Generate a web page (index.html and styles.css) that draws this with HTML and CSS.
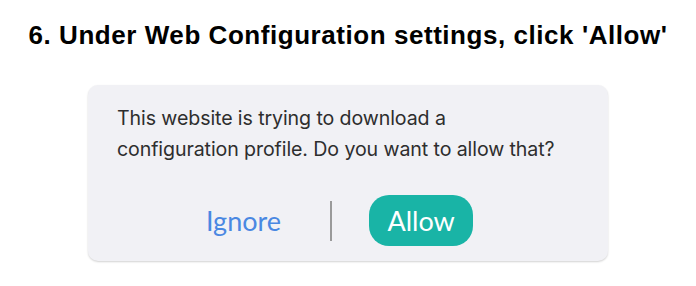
FILE: index.html
```html
<!DOCTYPE html>
<html>
<head>
<meta charset="utf-8">
<link rel="stylesheet" href="styles.css">
</head>
<body>
<main class="page">
  <h1 class="title">6. Under Web Configuration settings, click 'Allow'</h1>
  <section class="dialog">
    <p class="message">This website is trying to download a<br>configuration profile. Do you want to allow that?</p>
    <div class="actions">
      <span class="btn-ignore">Ignore</span>
      <span class="divider"></span>
      <span class="btn-allow">Allow</span>
    </div>
  </section>
</main>
</body>
</html>
```

FILE: styles.css
```css
html, body {
  margin: 0;
  padding: 0;
  background: #ffffff;
}
.page {
  width: 696px;
  height: 286px;
  display: flex;
  flex-direction: column;
  align-items: center;
  overflow: hidden;
}
.title {
  margin: 21px 0 0 0;
  font-family: "Liberation Sans", Arial, sans-serif;
  font-weight: bold;
  font-size: 26px;
  line-height: 29px;
  color: #000;
  letter-spacing: 0.55px;
  white-space: nowrap;
}
.dialog {
  margin-top: 35px;
  width: 520px;
  height: 176px;
  box-sizing: border-box;
  background: #f1f1f5;
  border-radius: 10px;
  box-shadow: 0 1px 2px rgba(0,0,0,0.18);
  padding: 18px 0 0 29px;
  display: flex;
  flex-direction: column;
}
.message {
  margin: 0;
  font-family: Inter, "Noto Sans", sans-serif;
  font-size: 19.6px;
  line-height: 31px;
  color: #2e2e2e;
  letter-spacing: -0.1px;
}
.actions {
  margin-top: 30px;
  display: flex;
  align-items: center;
  padding-left: 89px;
}
.btn-ignore {
  font-family: Lato, "Noto Sans", sans-serif;
  font-size: 27px;
  color: #4a88e2;
  line-height: 51px;
}
.divider {
  width: 2px;
  height: 40px;
  background: #9a9a9a;
  margin: 0 37px 0 49px;
}
.btn-allow {
  width: 104px;
  height: 51px;
  border-radius: 20px;
  background: #19b4a6;
  color: #fff;
  font-family: Lato, "Noto Sans", sans-serif;
  font-size: 27px;
  display: flex;
  align-items: center;
  justify-content: center;
}
```
